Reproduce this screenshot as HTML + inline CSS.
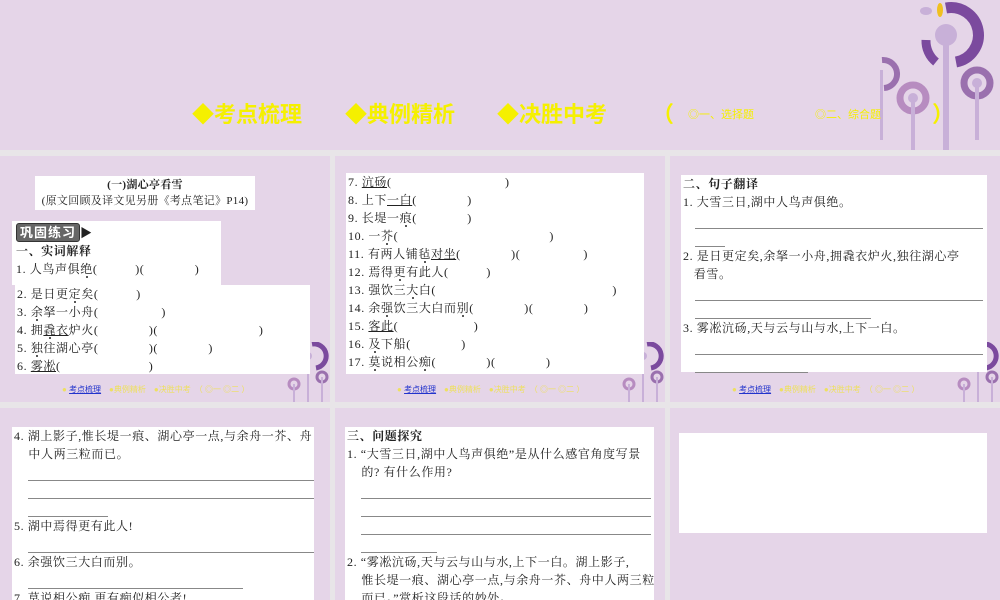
<!DOCTYPE html>
<html><head><meta charset="utf-8"><style>
*{margin:0;padding:0;box-sizing:border-box}
body{width:1000px;height:600px;overflow:hidden;background:#e8e5e8;position:relative;font-family:"Liberation Serif","Noto Serif CJK SC",serif;color:#222}
.p{position:absolute;background:#e5d5e8;overflow:hidden}
.w{position:absolute;background:#fff;font-size:12px;line-height:18px;letter-spacing:0.6px;white-space:nowrap}
.top span{position:absolute;top:97px;font-family:"Liberation Sans","Noto Sans CJK SC",sans-serif;font-size:22px;color:#f5f000;white-space:nowrap;font-weight:bold}
.top span.s{font-size:11px;top:106px;font-weight:normal}
.nav{position:absolute;font-family:"Liberation Sans","Noto Sans CJK SC",sans-serif;font-size:8px;color:#eee060;white-space:nowrap}
.nav b{color:#2233cc;text-decoration:underline;font-weight:normal}
.ln{border-bottom:1px solid #888;height:18px}
.d{position:relative}
.d::after{content:"";position:absolute;left:50%;bottom:-2px;width:2px;height:2px;margin-left:-1px;background:#222;border-radius:1px}
u{text-decoration:underline}
.tag{display:inline-block;background:#666;color:#fff;font-family:"Liberation Sans","Noto Sans CJK SC",sans-serif;font-weight:bold;font-size:13px;padding:0 3px;border-radius:3px;border:1px solid #333;line-height:17px;letter-spacing:1px}
.mini{position:absolute;right:0;bottom:0}
</style></head><body>
<div class="p" style="left:0;top:0;width:1000px;height:150px">
<svg style="position:absolute;left:860px;top:0" width="140" height="150">
<path d="M86 8 A27 27 0 0 1 96 62" stroke="#7b4a9e" stroke-width="11" fill="none"/>
<path d="M66 40 A27 27 0 0 0 76 62" stroke="#7b4a9e" stroke-width="9" fill="none"/>
<circle cx="86" cy="35" r="11" fill="#c8b0d8"/><rect x="83" y="35" width="6" height="115" fill="#c8b0d8"/>
<ellipse cx="80" cy="10" rx="3" ry="7" fill="#f0c020"/><ellipse cx="66" cy="11" rx="6" ry="4" fill="#c8b0d8"/>
<circle cx="117" cy="83" r="13" stroke="#9a70ae" stroke-width="7" fill="none"/><circle cx="117" cy="83" r="5" fill="#c8b0d8"/><rect x="115" y="83" width="4" height="57" fill="#c8b0d8"/>
<circle cx="53" cy="98" r="13" stroke="#b78cc0" stroke-width="7" fill="none"/><circle cx="53" cy="98" r="5" fill="#c8b0d8"/><rect x="51" y="98" width="4" height="52" fill="#c8b0d8"/>
<path d="M22 60 A14 14 0 0 1 24 88" stroke="#9a70ae" stroke-width="6" fill="none"/><rect x="20" y="70" width="3" height="70" fill="#c8b0d8"/>
</svg>
<div class="top"><span style="left:192px">◆考点梳理</span><span style="left:345px">◆典例精析</span><span style="left:497px">◆决胜中考</span><span style="left:652px">（</span><span class="s" style="left:688px">◎一、选择题</span><span class="s" style="left:815px">◎二、综合题</span><span style="left:932px">）</span></div>
</div>

<div class="p" style="left:0;top:156px;width:330px;height:246px">
<svg class="mini" width="50" height="60"><path d="M32 2 A12 12 0 0 1 36 26" stroke="#7b4a9e" stroke-width="5" fill="none"/><circle cx="28" cy="14" r="4" fill="#c8b0d8"/><rect x="27" y="14" width="2" height="46" fill="#c8b0d8"/><circle cx="42" cy="35" r="5" stroke="#9a70ae" stroke-width="3" fill="none"/><rect x="41" y="35" width="2" height="25" fill="#c8b0d8"/><circle cx="14" cy="42" r="5" stroke="#b78cc0" stroke-width="3" fill="none"/><rect x="13" y="42" width="2" height="18" fill="#c8b0d8"/></svg>
<div class="w" style="left:35px;top:20px;width:220px;height:34px;text-align:center;font-size:11px;line-height:16px;padding-top:1px;letter-spacing:0.3px"><b>(一)湖心亭看雪</b><br>(原文回顾及译文见另册《考点笔记》P14)</div>
<div class="w" style="left:12px;top:65px;width:209px;height:64px;padding-left:4px;padding-top:2px"><span class="tag">巩固练习</span><span style="font-size:12px">▶</span><br><b>一、实词解释</b><br>1. 人鸟声俱<span class="d">绝</span>(　　　)(　　　　)</div>
<div class="w" style="left:15px;top:129px;width:295px;height:89px;padding-left:2px">2. 是日更<span class="d">定</span>矣(　　　)<br>3. <span class="d">余</span>拏一小舟(　　　　　)<br>4. 拥<u class="d">毳</u><u>衣</u>炉火(　　　　)(　　　　　　　　)<br>5. <span class="d">独</span>往湖心亭(　　　　)(　　　　)<br>6. <u>雾凇</u>(　　　　　　　)</div>
<div class="nav" style="left:62px;top:228px">● <b>考点梳理</b>　●典例精析　●决胜中考　（ ◎一 ◎二 ）</div>
</div>

<div class="p" style="left:335px;top:156px;width:330px;height:246px">
<svg class="mini" width="50" height="60"><path d="M32 2 A12 12 0 0 1 36 26" stroke="#7b4a9e" stroke-width="5" fill="none"/><circle cx="28" cy="14" r="4" fill="#c8b0d8"/><rect x="27" y="14" width="2" height="46" fill="#c8b0d8"/><circle cx="42" cy="35" r="5" stroke="#9a70ae" stroke-width="3" fill="none"/><rect x="41" y="35" width="2" height="25" fill="#c8b0d8"/><circle cx="14" cy="42" r="5" stroke="#b78cc0" stroke-width="3" fill="none"/><rect x="13" y="42" width="2" height="18" fill="#c8b0d8"/></svg>
<div class="w" style="left:11px;top:17px;width:298px;height:201px;padding-left:2px">7. <u>沆砀</u>(　　　　　　　　　)<br>8. 上下<u>一白</u>(　　　　)<br>9. 长堤一<span class="d">痕</span>(　　　　)<br>10. 一<span class="d">芥</span>(　　　　　　　　　　　　)<br>11. 有两人铺<span class="d">毡</span><u>对坐</u>(　　　　)(　　　　　)<br>12. 焉得<span class="d">更</span>有此人(　　　)<br>13. 强饮三<span class="d">大</span>白(　　　　　　　　　　　　　　)<br>14. 余<span class="d">强</span>饮三大白而<span class="d">别</span>(　　　　)(　　　　)<br>15. <u>客此</u>(　　　　　　)<br>16. <span class="d">及</span>下船(　　　　)<br>17. <span class="d">莫</span>说相公<span class="d">痴</span>(　　　　)(　　　　)</div>
<div class="nav" style="left:62px;top:228px">● <b>考点梳理</b>　●典例精析　●决胜中考　（ ◎一 ◎二 ）</div>
</div>

<div class="p" style="left:670px;top:156px;width:330px;height:246px">
<svg class="mini" width="50" height="60"><path d="M32 2 A12 12 0 0 1 36 26" stroke="#7b4a9e" stroke-width="5" fill="none"/><circle cx="28" cy="14" r="4" fill="#c8b0d8"/><rect x="27" y="14" width="2" height="46" fill="#c8b0d8"/><circle cx="42" cy="35" r="5" stroke="#9a70ae" stroke-width="3" fill="none"/><rect x="41" y="35" width="2" height="25" fill="#c8b0d8"/><circle cx="14" cy="42" r="5" stroke="#b78cc0" stroke-width="3" fill="none"/><rect x="13" y="42" width="2" height="18" fill="#c8b0d8"/></svg>
<div class="w" style="left:11px;top:19px;width:306px;height:197px;padding-left:2px"><b>二、句子翻译</b><br>1. 大雪三日,湖中人鸟声俱绝。<div class="ln" style="margin:0 4px 0 12px"></div><div class="ln" style="margin-left:12px;width:30px"></div>2. 是日更定矣,余拏一小舟,拥毳衣炉火,独往湖心亭<br>&nbsp;&nbsp;&nbsp;看雪。<div class="ln" style="margin:0 4px 0 12px"></div><div class="ln" style="margin-left:12px;width:176px"></div>3. 雾凇沆砀,天与云与山与水,上下一白。<div class="ln" style="margin:0 4px 0 12px"></div><div class="ln" style="margin-left:12px;width:113px"></div></div>
<div class="nav" style="left:62px;top:228px">● <b>考点梳理</b>　●典例精析　●决胜中考　（ ◎一 ◎二 ）</div>
</div>

<div class="p" style="left:0;top:408px;width:330px;height:192px">
<div class="w" style="left:12px;top:19px;width:302px;height:180px;padding-left:2px">4. 湖上影子,惟长堤一痕、湖心亭一点,与余舟一芥、舟<br>&nbsp;&nbsp;&nbsp;&nbsp;中人两三粒而已。<div class="ln" style="margin:0 0 0 14px"></div><div class="ln" style="margin:0 0 0 14px"></div><div class="ln" style="margin-left:14px;width:80px"></div>5. 湖中焉得更有此人!<div class="ln" style="margin:0 0 0 14px"></div>6. 余强饮三大白而别。<div class="ln" style="margin-left:14px;width:215px"></div>7. 莫说相公痴,更有痴似相公者!</div>
</div>

<div class="p" style="left:335px;top:408px;width:330px;height:192px">
<div class="w" style="left:10px;top:19px;width:309px;height:180px;padding-left:2px"><b>三、问题探究</b><br>1. “大雪三日,湖中人鸟声俱绝”是从什么感官角度写景<br>&nbsp;&nbsp;&nbsp;&nbsp;的? 有什么作用?<div class="ln" style="margin:0 3px 0 14px"></div><div class="ln" style="margin:0 3px 0 14px"></div><div class="ln" style="margin:0 3px 0 14px"></div><div class="ln" style="margin-left:14px;width:76px"></div>2. “雾凇沆砀,天与云与山与水,上下一白。湖上影子,<br>&nbsp;&nbsp;&nbsp;&nbsp;惟长堤一痕、湖心亭一点,与余舟一芥、舟中人两三粒<br>&nbsp;&nbsp;&nbsp;&nbsp;而已。”赏析这段话的妙处。</div>
</div>

<div class="p" style="left:670px;top:408px;width:330px;height:192px">
<div class="w" style="left:9px;top:25px;width:308px;height:100px"></div>
</div>
</body></html>
